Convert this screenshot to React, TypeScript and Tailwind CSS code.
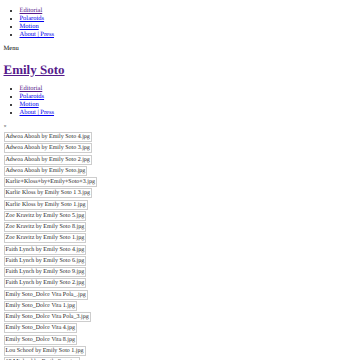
import React from "react";

const nav = ["Editorial", "Polaroids", "Motion", "About | Press"];
const imgs = [
  "Adwoa Aboah by Emily Soto 4.jpg",
  "Adwoa Aboah by Emily Soto 3.jpg",
  "Adwoa Aboah by Emily Soto 2.jpg",
  "Adwoa Aboah by Emily Soto.jpg",
  "Karlie+Kloss+by+Emily+Soto+3.jpg",
  "Karlie Kloss by Emily Soto 1 3.jpg",
  "Karlie Kloss by Emily Soto 1.jpg",
  "Zoe Kravitz by Emily Soto 5.jpg",
  "Zoe Kravitz by Emily Soto 8.jpg",
  "Zoe Kravitz by Emily Soto 1.jpg",
  "Faith Lynch by Emily Soto 4.jpg",
  "Faith Lynch by Emily Soto 6.jpg",
  "Faith Lynch by Emily Soto 9.jpg",
  "Faith Lynch by Emily Soto 2.jpg",
  "Emily Soto_Dolce Vita Pola_.jpg",
  "Emily Soto_Dolce Vita 1.jpg",
  "Emily Soto_Dolce Vita Pola_3.jpg",
  "Emily Soto_Dolce Vita 4.jpg",
  "Emily Soto_Dolce Vita 8.jpg",
  "Lou Schoof by Emily Soto 1.jpg",
  "18 Michael by Emily Soto.jpg",
];

function Nav() {
  return (
    <ul className="list-disc pl-[16px] my-[6px]">
      {nav.map((n, i) => (
        <li key={n} className="h-[8px]">
          <a href="#" className={"underline " + (i === 0 ? "text-[#551a8b]" : "text-[#0000ee]")}>
            {n}
          </a>
        </li>
      ))}
    </ul>
  );
}

export default function App() {
  return (
    <div className="h-[360px] overflow-hidden bg-white px-[3.5px] pt-px font-['Liberation_Serif',serif] text-[6.5px] leading-[8px] text-black [text-rendering:geometricPrecision]">
      <Nav />
      <div className="h-[8px]">Menu</div>
      <h1 className="mt-[8px] mb-[7px] text-[13px] leading-[17px] font-bold">
        <a href="#" className="text-[#551a8b] underline">Emily Soto</a>
      </h1>
      <Nav />
      <div className="h-[9px] text-[5.5px] leading-[9px]">×</div>
      <div className="flex flex-col">
        {imgs.map((s) => (
          <div key={s} className="h-[11.25px] shrink-0">
            <span className="inline-block h-[10px] border border-[#cdcdcd] px-px text-[6px] leading-[8px] text-[#222]">{s}</span>
          </div>
        ))}
      </div>
    </div>
  );
}
